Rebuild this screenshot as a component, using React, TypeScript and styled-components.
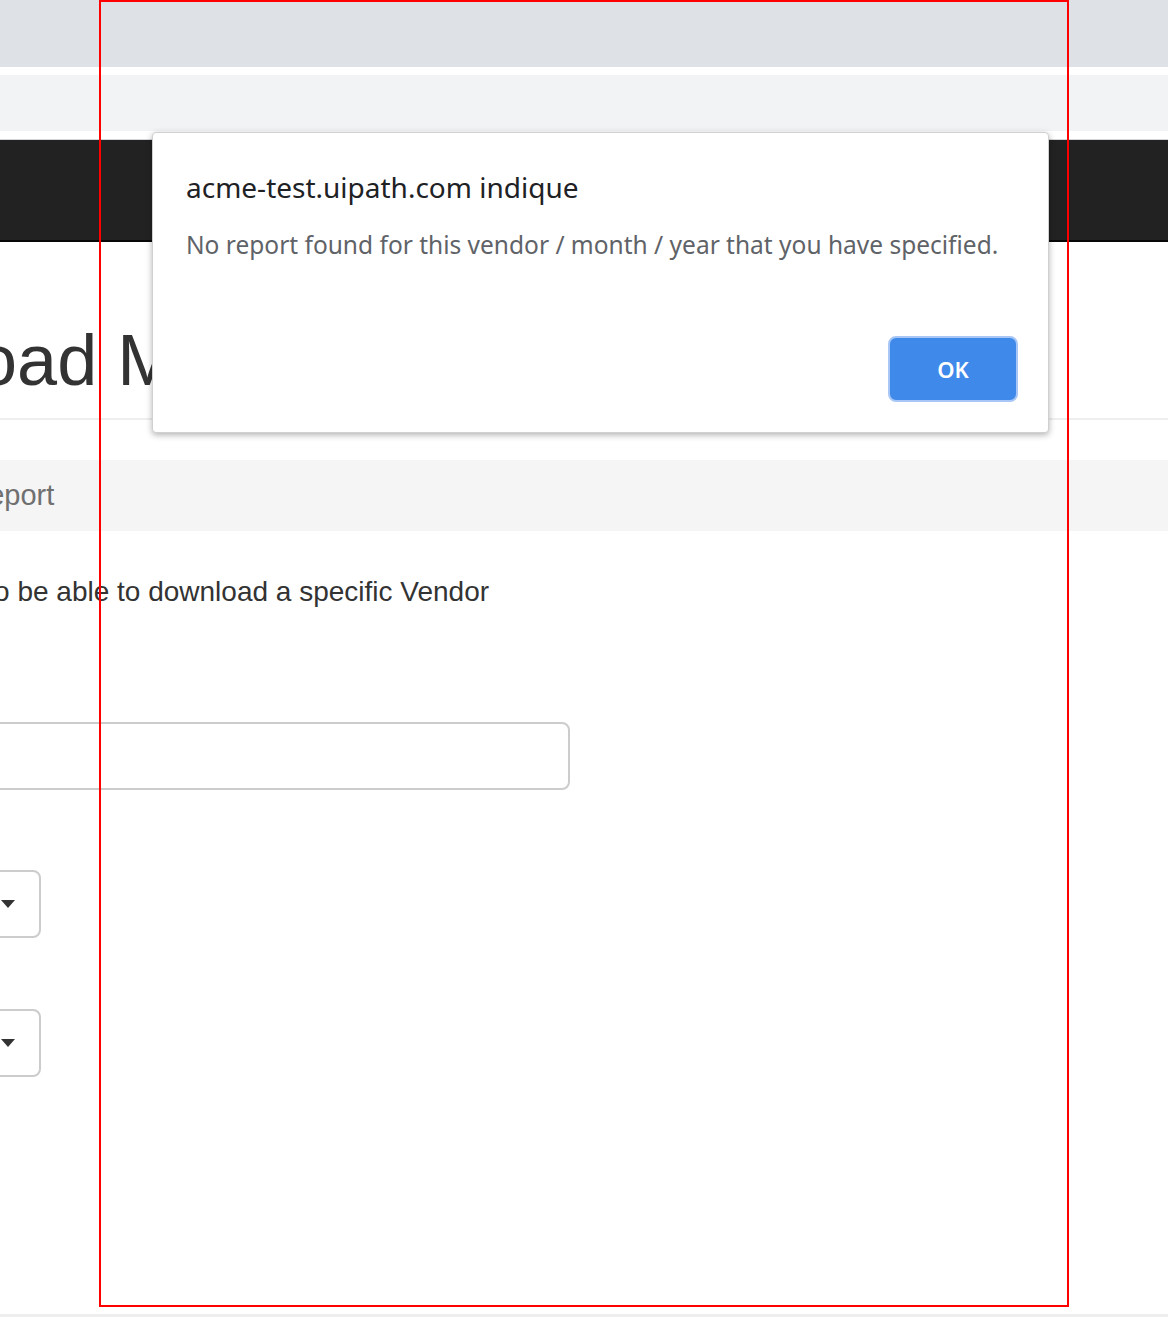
import React from "react";
import styled, { createGlobalStyle } from "styled-components";

const GlobalStyle = createGlobalStyle`
  html, body {
    margin: 0;
    padding: 0;
    height: 1331px;
    overflow: hidden;
    background: #fff;
    font-family: "Liberation Sans", Arial, sans-serif;
  }
  #root {
    position: relative;
    height: 1331px;
    overflow: hidden;
  }
`;

const TabStrip = styled.div`
  height: 67px;
  background: #dee1e6;
`;

const Omnibox = styled.div`
  height: 56px;
  margin-top: 8px;
  background: #f1f3f4;
`;

const ChromeEdge = styled.div`
  height: 8px;
  border-bottom: 1px solid #d4d6da;
`;

const Navbar = styled.div`
  height: 100px;
  background: #222;
  border-bottom: 2px solid #080808;
`;

const Container = styled.div`
  margin-left: -262px;
  width: 1600px;
  padding: 0 30px;
  box-sizing: border-box;
  color: #333;
`;

const PageHeader = styled.div`
  margin: 79px 0 40px;
  padding-bottom: 18px;
  border-bottom: 2px solid #eee;
`;

const Title = styled.h1`
  margin: 0 0 0 9px;
  font-size: 72px;
  font-weight: 400;
  line-height: 1.1;
  white-space: nowrap;
`;

const Panel = styled.div`
  background: #fff;
`;

const PanelHeading = styled.div`
  height: 71px;
  display: flex;
  align-items: center;
  padding: 0 38px;
  background: #f5f5f5;
  font-size: 29px;
  color: #707070;
  white-space: nowrap;
`;

const PanelBody = styled.div`
  padding: 41px 30px 0;
`;

const Form = styled.div`
  width: 772px;
`;

const Intro = styled.p`
  margin: 0 0 20px;
  font-size: 28px;
  line-height: 40px;
`;

const Field = styled.div<{ $gap: number }>`
  margin-bottom: ${(p) => p.$gap}px;
`;

const Label = styled.label`
  display: block;
  height: 40px;
  margin-bottom: 10px;
  font-size: 28px;
  font-weight: 700;
  line-height: 40px;
  white-space: nowrap;
`;

const TextInput = styled.div`
  height: 68px;
  box-sizing: border-box;
  border: 2px solid #ccc;
  border-radius: 8px;
  background: #fff;
`;

const Select = styled.div`
  width: 243px;
  height: 68px;
  box-sizing: border-box;
  border: 2px solid #ccc;
  border-radius: 8px;
  display: flex;
  align-items: center;
  justify-content: flex-end;
  padding-right: 24px;
`;

const Caret = styled.span`
  width: 0;
  height: 0;
  border-left: 7px solid transparent;
  border-right: 7px solid transparent;
  border-top: 8px solid #333;
`;

const Footer = styled.div`
  margin-top: 237px;
  border-top: 3px solid #eee;
`;

const Backdrop = styled.div`
  position: absolute;
  left: 152px;
  top: 132px;
  width: 897px;
  height: 301px;
  box-sizing: border-box;
  background: #fff;
  border: 1px solid #d0d0d0;
  border-radius: 4px;
  box-shadow: 0 2px 6px rgba(0, 0, 0, 0.3);
  display: flex;
  flex-direction: column;
  padding: 34px 30px 30px 33px;
  font-family: "Noto Sans", "Open Sans", sans-serif;
`;

const DialogTitle = styled.div`
  font-size: 28px;
  line-height: 40px;
  color: #202124;
  white-space: nowrap;
`;

const DialogMessage = styled.div`
  margin-top: 18px;
  font-size: 24.5px;
  line-height: 40px;
  color: #5f6368;
  white-space: nowrap;
`;

const DialogActions = styled.div`
  margin-top: auto;
  display: flex;
  justify-content: flex-end;
`;

const OkButton = styled.button`
  width: 130px;
  height: 66px;
  box-sizing: border-box;
  border: 2px solid #a8c7f7;
  border-radius: 8px;
  background: #3f89ea;
  color: #fff;
  font-family: "Noto Sans", "Open Sans", sans-serif;
  font-size: 22px;
  font-weight: 600;
  cursor: pointer;
`;

const Annotation = styled.div`
  position: absolute;
  left: 99px;
  top: 0;
  width: 970px;
  height: 1307px;
  box-sizing: border-box;
  border: 2px solid #ff0000;
  pointer-events: none;
`;

const App: React.FC = () => {
  return (
    <>
      <GlobalStyle />
      <TabStrip />
      <Omnibox />
      <ChromeEdge />
      <Navbar />
      <Container>
        <PageHeader>
          <Title>Download Monthly Report</Title>
        </PageHeader>
        <Panel>
          <PanelHeading>Download a Report</PanelHeading>
          <PanelBody>
            <Form>
              <Intro>
                Fill in this form to be able to download a specific Vendor
                Monthly Report.
              </Intro>
              <Field $gap={30}>
                <Label>Vendor</Label>
                <TextInput />
              </Field>
              <Field $gap={21}>
                <Label>Month</Label>
                <Select>
                  <Caret />
                </Select>
              </Field>
              <Field $gap={0}>
                <Label>Year</Label>
                <Select>
                  <Caret />
                </Select>
              </Field>
            </Form>
          </PanelBody>
        </Panel>
        <Footer />
      </Container>
      <Backdrop>
        <DialogTitle>acme-test.uipath.com indique</DialogTitle>
        <DialogMessage>
          No report found for this vendor / month / year that you have specified.
        </DialogMessage>
        <DialogActions>
          <OkButton>OK</OkButton>
        </DialogActions>
      </Backdrop>
      <Annotation />
    </>
  );
};

export default App;
